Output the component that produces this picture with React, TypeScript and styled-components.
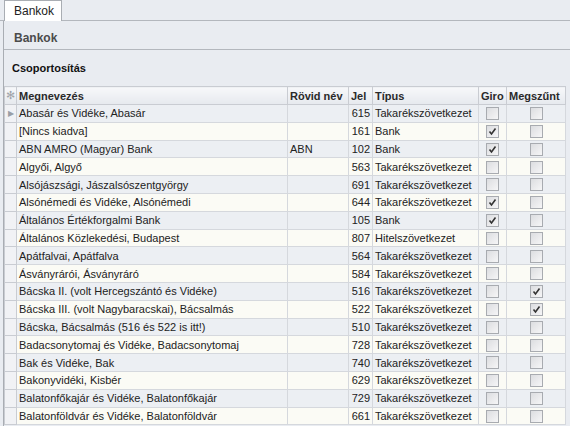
import React from "react";
import styled, { createGlobalStyle } from "styled-components";

type Bank = {
  name: string;
  short?: string;
  code: number;
  type: string;
  giro?: boolean;
  closed?: boolean;
};

const banks: Bank[] = [
  { name: "Abasár és Vidéke, Abasár", code: 615, type: "Takarékszövetkezet" },
  { name: "[Nincs kiadva]", code: 161, type: "Bank", giro: true },
  { name: "ABN AMRO (Magyar) Bank", short: "ABN", code: 102, type: "Bank", giro: true },
  { name: "Algyői, Algyő", code: 563, type: "Takarékszövetkezet" },
  { name: "Alsójászsági, Jászalsószentgyörgy", code: 691, type: "Takarékszövetkezet" },
  { name: "Alsónémedi és Vidéke, Alsónémedi", code: 644, type: "Takarékszövetkezet", giro: true },
  { name: "Általános Értékforgalmi Bank", code: 105, type: "Bank", giro: true },
  { name: "Általános Közlekedési, Budapest", code: 807, type: "Hitelszövetkezet" },
  { name: "Apátfalvai, Apátfalva", code: 564, type: "Takarékszövetkezet" },
  { name: "Ásványrárói, Ásványráró", code: 584, type: "Takarékszövetkezet" },
  { name: "Bácska II. (volt Hercegszántó és Vidéke)", code: 516, type: "Takarékszövetkezet", closed: true },
  { name: "Bácska III. (volt Nagybaracskai), Bácsalmás", code: 522, type: "Takarékszövetkezet", closed: true },
  { name: "Bácska, Bácsalmás (516 és 522 is itt!)", code: 510, type: "Takarékszövetkezet" },
  { name: "Badacsonytomaj és Vidéke, Badacsonytomaj", code: 728, type: "Takarékszövetkezet" },
  { name: "Bak és Vidéke, Bak", code: 740, type: "Takarékszövetkezet" },
  { name: "Bakonyvidéki, Kisbér", code: 629, type: "Takarékszövetkezet" },
  { name: "Balatonfőkajár és Vidéke, Balatonfőkajár", code: 729, type: "Takarékszövetkezet" },
  { name: "Balatonföldvár és Vidéke, Balatonföldvár", code: 661, type: "Takarékszövetkezet" },
];

const GlobalStyle = createGlobalStyle`
  html, body {
    margin: 0;
    height: 100%;
    overflow: hidden;
    background: #e9ecf1;
    font-family: "Liberation Sans", Arial, sans-serif;
    color: #1e1e1e;
  }
`;

const Page = styled.div`
  display: flex;
  flex-direction: column;
  height: 426px;
`;

const TabStrip = styled.div`
  display: flex;
  height: 20px;
  padding-left: 4px;
  border-bottom: 1px solid #b3b7bd;
`;

const Tab = styled.div`
  display: flex;
  align-items: center;
  padding: 0 9px;
  width: 38px;
  background: #fff;
  border: 1px solid #a9adb3;
  border-bottom: none;
  margin-bottom: -1px;
  font-size: 12px;
  color: #222;
`;

const Panel = styled.div`
  flex: 1;
  display: flex;
  flex-direction: column;
  margin-left: 3px;
  border-left: 1px solid #a9adb3;
  min-height: 0;
`;

const PanelHeader = styled.div`
  height: 22px;
  display: flex;
  align-items: center;
  padding: 6px 0 0 10px;
  border-bottom: 1px solid #b3b7bd;
  font-size: 12px;
  font-weight: bold;
  color: #4b4b4b;
`;

const GroupLabel = styled.div`
  height: 36px;
  display: flex;
  align-items: center;
  padding-left: 8px;
  font-size: 11px;
  font-weight: bold;
  color: #111;
`;

const Grid = styled.table`
  width: 561px;
  border-collapse: collapse;
  table-layout: fixed;
  font-size: 11px;
  background: #fff;
  border-top: 1px solid #c2c6cc;
`;

const HeadCell = styled.th<{ $align?: string }>`
  height: 17px;
  padding: 0 2px;
  text-align: ${(p) => p.$align || "left"};
  font-weight: bold;
  color: #2a2a2a;
  background: linear-gradient(#f7f8fa, #e6e9ee);
  border: 1px solid #c9ccd2;
  white-space: nowrap;
  overflow: hidden;
`;

const Row = styled.tr<{ $odd: boolean }>`
  background: ${(p) => (p.$odd ? "#eceff3" : "#fbfbf5")};
`;

const Cell = styled.td<{ $align?: string }>`
  height: 16.8px;
  padding: 0 2px;
  text-align: ${(p) => p.$align || "left"};
  border: 1px solid #d5d8dd;
  white-space: nowrap;
  overflow: hidden;
  color: #222;
`;

const IndicatorCell = styled.td`
  padding: 0;
  text-align: center;
  background: #f1f2f5;
  border: 1px solid #c9ccd2;
  color: #9a9ea5;
  font-size: 8px;
`;

const IndicatorHead = styled.th`
  padding: 0;
  text-align: center;
  background: linear-gradient(#f7f8fa, #e6e9ee);
  border: 1px solid #c9ccd2;
  color: #a0a4aa;
  font-size: 11px;
  font-weight: normal;
`;

const Box = styled.span`
  display: inline-flex;
  align-items: center;
  justify-content: center;
  width: 11px;
  height: 11px;
  border: 1px solid #a8abb0;
  background: linear-gradient(135deg, #dcdde0, #f6f6f7);
  vertical-align: middle;
`;

function Check({ on }: { on?: boolean }) {
  return (
    <Box>
      {on && (
        <svg width="9" height="9" viewBox="0 0 9 9">
          <path d="M1.5 4.5 L3.5 7 L7.5 1.5" fill="none" stroke="#333" strokeWidth="1.6" />
        </svg>
      )}
    </Box>
  );
}

export default function App() {
  return (
    <Page>
      <GlobalStyle />
      <TabStrip>
        <Tab>Bankok</Tab>
      </TabStrip>
      <Panel>
        <PanelHeader>Bankok</PanelHeader>
        <GroupLabel>Csoportosítás</GroupLabel>
        <Grid>
          <colgroup>
            <col style={{ width: 12 }} />
            <col style={{ width: 271 }} />
            <col style={{ width: 61 }} />
            <col style={{ width: 24 }} />
            <col style={{ width: 106 }} />
            <col style={{ width: 28 }} />
            <col style={{ width: 59 }} />
          </colgroup>
          <thead>
            <tr>
              <IndicatorHead>✻</IndicatorHead>
              <HeadCell>Megnevezés</HeadCell>
              <HeadCell>Rövid név</HeadCell>
              <HeadCell>Jel</HeadCell>
              <HeadCell>Típus</HeadCell>
              <HeadCell>Giro</HeadCell>
              <HeadCell>Megszűnt</HeadCell>
            </tr>
          </thead>
          <tbody>
            {banks.map((b, i) => (
              <Row key={b.code} $odd={i % 2 === 0}>
                <IndicatorCell>{i === 0 ? "▶" : ""}</IndicatorCell>
                <Cell>{b.name}</Cell>
                <Cell>{b.short}</Cell>
                <Cell $align="right">{b.code}</Cell>
                <Cell>{b.type}</Cell>
                <Cell $align="center">
                  <Check on={b.giro} />
                </Cell>
                <Cell $align="center">
                  <Check on={b.closed} />
                </Cell>
              </Row>
            ))}
          </tbody>
        </Grid>
      </Panel>
    </Page>
  );
}
